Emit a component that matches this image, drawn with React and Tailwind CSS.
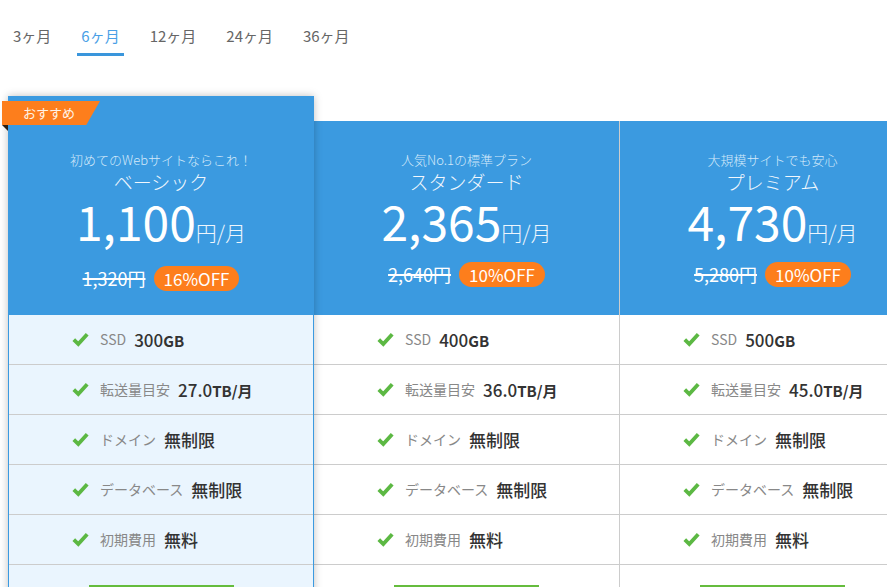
import { useState } from "react";

const periods = ["3ヶ月", "6ヶ月", "12ヶ月", "24ヶ月", "36ヶ月"];

const plans = [
  {
    id: "basic",
    catch: "初めてのWebサイトならこれ！",
    name: "ベーシック",
    price: "1,100",
    oldPrice: "1,320円",
    off: "16%OFF",
    ssd: "300",
    transfer: "27.0",
    featured: true,
  },
  {
    id: "standard",
    catch: "人気No.1の標準プラン",
    name: "スタンダード",
    price: "2,365",
    oldPrice: "2,640円",
    off: "10%OFF",
    ssd: "400",
    transfer: "36.0",
  },
  {
    id: "premium",
    catch: "大規模サイトでも安心",
    name: "プレミアム",
    price: "4,730",
    oldPrice: "5,280円",
    off: "10%OFF",
    ssd: "500",
    transfer: "45.0",
  },
];

// thick green tick, like the old icon font one
function Check() {
  return (
    <svg width="17" height="15" viewBox="0 0 17 15" className="shrink-0">
      <path
        d="M1.8 7.6 L6.3 12 L15.2 2.2"
        fill="none"
        stroke="#5cb843"
        strokeWidth="3.8"
        strokeLinejoin="miter"
      />
    </svg>
  );
}

function Feature({ label, children }) {
  return (
    <li className="h-[50px] flex items-center pl-[63px] border-b border-[#cccccc]">
      <Check />
      <span className="ml-[11px] text-[14px] text-[#888888]">{label}</span>
      <span className="ml-[8px] text-[17px] font-medium text-[#333333]">{children}</span>
    </li>
  );
}

function PlanCard({ plan }) {
  const { featured } = plan;

  return (
    <div
      className={
        featured
          ? "relative w-[306px] shrink-0 border border-[#3b9ae0] bg-[#eaf5fe] shadow-[0_0_8px_rgba(0,0,0,0.25)] z-10"
          : "relative w-[306px] shrink-0 mt-[25px] border-r border-[#cccccc] bg-white"
      }
    >
      {featured && (
        <div className="absolute -left-[7px] top-[4px]">
          <div className="w-[98px] h-[24px] bg-[#fd7e1c] pl-[21px] text-[13px] leading-[24px] text-[#fff3e6] [clip-path:polygon(0_0,100%_0,86%_100%,0_100%)]">
            おすすめ
          </div>
          <div className="w-0 h-0 border-t-[6px] border-l-[6px] border-t-[#2a1f14] border-l-transparent" />
        </div>
      )}

      {/* price header */}
      <div
        className={`bg-[#3b9ae0] flex flex-col items-center ${
          featured ? "h-[218px] pt-[53px]" : "h-[194px] pt-[29px]"
        }`}
      >
        <p className="text-[13px] leading-[20px] font-light text-[#d3e9fa]">{plan.catch}</p>
        <p className="text-[19px] leading-[24px] font-light text-[#f1f7fd]">{plan.name}</p>
        <p className="flex items-baseline text-white h-[50px] leading-[50px] mt-[1px]">
          <span className="text-[48px] font-normal leading-[50px]">{plan.price}</span>
          <span className="text-[21px] font-light leading-none text-[#eef6fd]">円/月</span>
        </p>
        <div className={`flex items-center h-[25px] ${featured ? "mt-[21px]" : "mt-[17px]"}`}>
          <span className="text-[18px] text-white line-through decoration-2">{plan.oldPrice}</span>
          <span className="ml-[8px] h-[25px] px-[10px] rounded-full bg-[#fd7e1c] text-white text-[17px] leading-[25px]">
            {plan.off}
          </span>
        </div>
      </div>

      {/* features */}
      <ul>
        <Feature label="SSD">
          {plan.ssd}
          <span className="text-[15px] font-bold">GB</span>
        </Feature>
        <Feature label="転送量目安">
          {plan.transfer}
          <span className="text-[15px] font-bold">TB/月</span>
        </Feature>
        <Feature label="ドメイン">無制限</Feature>
        <Feature label="データベース">無制限</Feature>
        <Feature label="初期費用">無料</Feature>
      </ul>

      <div className="pt-[20px] pb-[20px] flex justify-center">
        <button aria-label="申し込む" className="w-[145px] h-[44px] bg-[#65bc3d]" />
      </div>
    </div>
  );
}

export default function App() {
  const [active, setActive] = useState(1);

  return (
    <div className="w-[887px] h-[587px] overflow-hidden bg-white font-['Noto_Sans_CJK_JP','Noto_Sans',sans-serif]">
      {/* period tabs */}
      <nav className="flex gap-[22px] pt-[25px] pl-[9px]">
        {periods.map((p, i) => (
          <button
            key={p}
            onClick={() => setActive(i)}
            className={`px-1 pb-[6px] text-[15px] leading-[22px] border-b-[3px] ${
              i === active
                ? "text-[#4aa0e6] border-[#3a96dc]"
                : "text-[#666666] border-transparent"
            }`}
          >
            {p}
          </button>
        ))}
      </nav>

      {/* plans */}
      <div className="flex items-start mt-[40px] pl-2">
        {plans.map((plan) => (
          <PlanCard key={plan.id} plan={plan} />
        ))}
      </div>
    </div>
  );
}
